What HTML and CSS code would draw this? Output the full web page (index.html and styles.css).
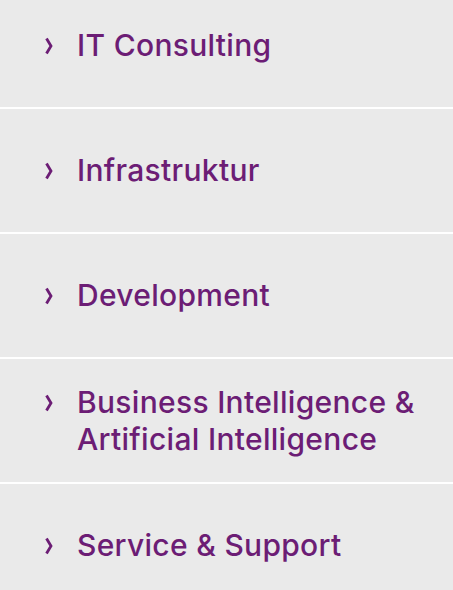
FILE: index.html
```html
<!DOCTYPE html>
<html lang="en">
<head>
    <meta charset="UTF-8">
    <meta name="viewport" content="width=device-width, initial-scale=1.0">
    <title>Leistungen</title>
    <link rel="stylesheet" href="styles.css">
</head>
<body>
    <ul class="menu">
        <li class="menu-item">
            <div class="entry">
                <svg class="chevron" viewBox="0 0 8 18"><polyline points="1.5,1.5 6,9 1.5,16.5"/></svg>
                <span class="label">IT Consulting</span>
            </div>
        </li>
        <li class="menu-item">
            <div class="entry">
                <svg class="chevron" viewBox="0 0 8 18"><polyline points="1.5,1.5 6,9 1.5,16.5"/></svg>
                <span class="label">Infrastruktur</span>
            </div>
        </li>
        <li class="menu-item">
            <div class="entry">
                <svg class="chevron" viewBox="0 0 8 18"><polyline points="1.5,1.5 6,9 1.5,16.5"/></svg>
                <span class="label">Development</span>
            </div>
        </li>
        <li class="menu-item">
            <div class="entry">
                <svg class="chevron" viewBox="0 0 8 18"><polyline points="1.5,1.5 6,9 1.5,16.5"/></svg>
                <span class="label">Business Intelligence &amp;<br>Artificial Intelligence</span>
            </div>
        </li>
        <li class="menu-item">
            <div class="entry">
                <svg class="chevron" viewBox="0 0 8 18"><polyline points="1.5,1.5 6,9 1.5,16.5"/></svg>
                <span class="label">Service &amp; Support</span>
            </div>
        </li>
    </ul>
</body>
</html>
```

FILE: styles.css
```css
body {
    margin: 0;
    background-color: #eaeaea;
    font-family: Inter, "Liberation Sans", Arial, sans-serif;
    overflow: hidden;
}
.menu {
    list-style: none;
    margin: -16px 0 0 0;
    padding: 0;
}
.menu-item {
    display: flex;
    align-items: center;
    height: 123px;
    padding-left: 45px;
    border-bottom: 2px solid #ffffff;
    color: #6c1d75;
}
.entry {
    display: flex;
    align-items: flex-start;
}
.chevron {
    width: 8px;
    height: 18px;
    flex-shrink: 0;
    margin-right: 24px;
    margin-top: 10px;
    fill: none;
    stroke: #6c1d75;
    stroke-width: 2.8;
}
.label {
    font-size: 30px;
    font-weight: 500;
    line-height: 37px;
    letter-spacing: 0.3px;
}
```
